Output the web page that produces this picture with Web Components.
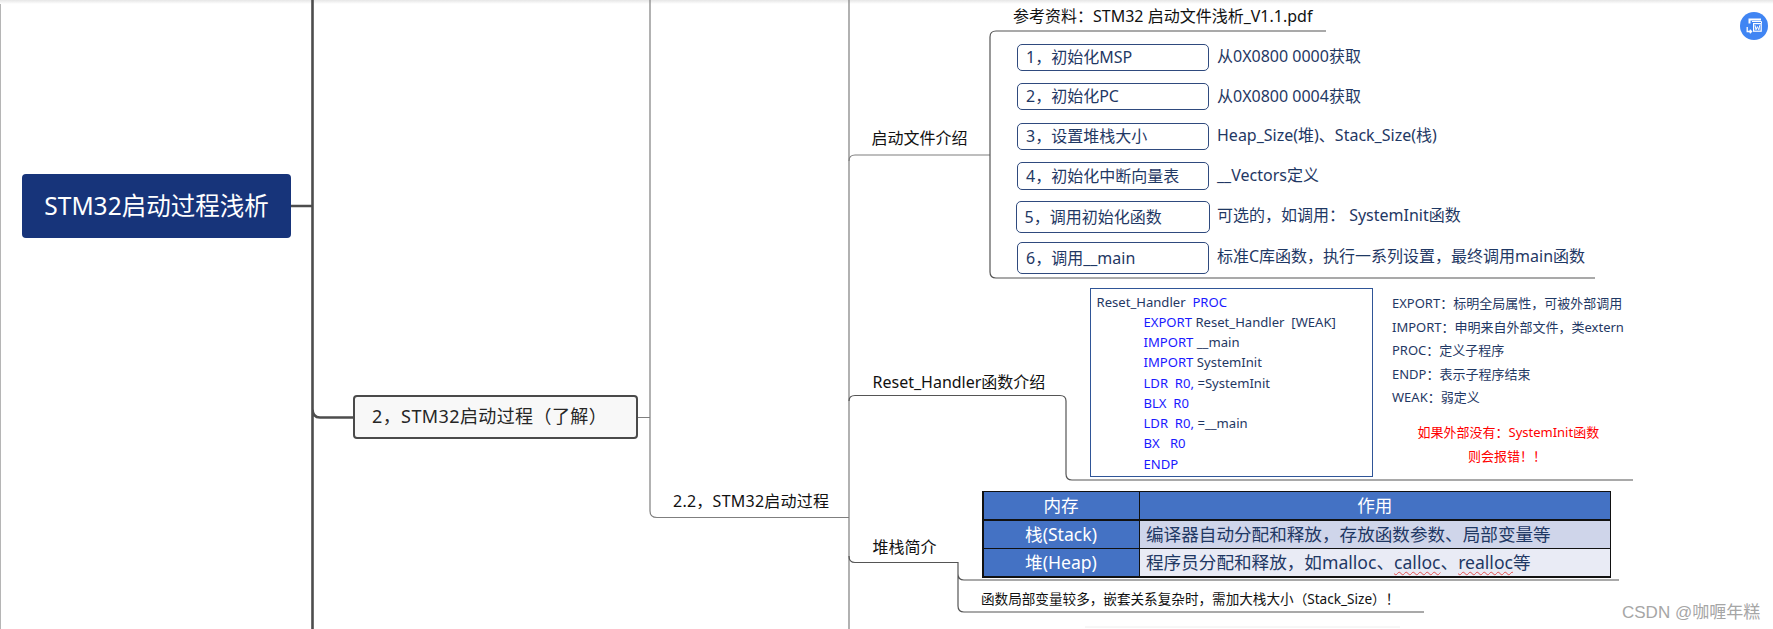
<!DOCTYPE html>
<html lang="zh"><head><meta charset="utf-8"><title>STM32启动过程浅析</title>
<style>
html,body{margin:0;padding:0;background:#fff;overflow:hidden}
body{font-family:"Noto Sans","Noto Sans CJK SC",sans-serif}
</style></head><body>
<mm-canvas>
  <mm-root x="22" y="174" w="269" h="64">STM32启动过程浅析</mm-root>
  <mm-topic x="353" y="395" w="285" h="44">2，STM32启动过程（了解）</mm-topic>

  <mm-label x="673" cy="502" size="16" track="0.25">2.2，STM32启动过程</mm-label>
  <mm-label x="871.5" cy="139" size="16">启动文件介绍</mm-label>
  <mm-label x="872.5" cy="383" size="16">Reset_Handler函数介绍</mm-label>
  <mm-label x="872.5" cy="548" size="16">堆栈简介</mm-label>
  <mm-label x="1013" cy="17" size="16">参考资料：STM32 启动文件浅析_V1.1.pdf</mm-label>

  <mm-step x="1017" y="43.5" w="192" h="27.5">1，初始化MSP</mm-step>
  <mm-step x="1017" y="83" w="192" h="27">2，初始化PC</mm-step>
  <mm-step x="1017" y="123" w="192" h="27">3，设置堆栈大小</mm-step>
  <mm-step x="1017" y="162" w="192" h="28">4，初始化中断向量表</mm-step>
  <mm-step x="1015.5" y="201" w="194" h="32">5，调用初始化函数</mm-step>
  <mm-step x="1017" y="242" w="192" h="32">6，调用__main</mm-step>

  <mm-label x="1217" cy="57" size="16" color="#1f3864">从0X0800 0000获取</mm-label>
  <mm-label x="1217" cy="97" size="16" color="#1f3864">从0X0800 0004获取</mm-label>
  <mm-label x="1217" cy="136" size="16" color="#1f3864">Heap_Size(堆)、Stack_Size(栈)</mm-label>
  <mm-label x="1217" cy="176" size="16" color="#1f3864">__Vectors定义</mm-label>
  <mm-label x="1217" cy="216" size="16" color="#1f3864">可选的，如调用： SystemInit函数</mm-label>
  <mm-label x="1217" cy="257" size="16" color="#1f3864">标准C库函数，执行一系列设置，最终调用main函数</mm-label>

  <mm-code x="1089.5" y="288" w="283" h="189">
    <code-line>Reset_Handler&nbsp; <b>PROC</b></code-line>
    <code-line in><b>EXPORT</b>&nbsp;Reset_Handler&nbsp; [WEAK]</code-line>
    <code-line in><b>IMPORT</b>&nbsp;__main</code-line>
    <code-line in><b>IMPORT</b>&nbsp;SystemInit</code-line>
    <code-line in><b>LDR&nbsp; R0,</b>&nbsp;=SystemInit</code-line>
    <code-line in><b>BLX&nbsp; R0</b></code-line>
    <code-line in><b>LDR&nbsp; R0,</b>&nbsp;=__main</code-line>
    <code-line in><b>BX&nbsp; &nbsp;R0</b></code-line>
    <code-line in><b>ENDP</b></code-line>
  </mm-code>

  <mm-label x="1392" cy="304" size="13" color="#1f3864">EXPORT：标明全局属性，可被外部调用</mm-label>
  <mm-label x="1392" cy="327.5" size="13" color="#1f3864">IMPORT：申明来自外部文件，类extern</mm-label>
  <mm-label x="1392" cy="351" size="13" color="#1f3864">PROC：定义子程序</mm-label>
  <mm-label x="1392" cy="374.5" size="13" color="#1f3864">ENDP：表示子程序结束</mm-label>
  <mm-label x="1392" cy="398" size="13" color="#1f3864">WEAK：弱定义</mm-label>
  <mm-label x="1417.5" cy="433" size="13" color="#ff0000">如果外部没有：SystemInit函数</mm-label>
  <mm-label x="1468" cy="457" size="13" color="#ff0000">则会报错！！</mm-label>

  <mm-table x="982" y="490.5" w="629" h="87"></mm-table>

  <mm-label x="981" cy="599" size="13.6" color="#111">函数局部变量较多，嵌套关系复杂时，需加大栈大小（Stack_Size）！</mm-label>

  <mm-badge x="1740" y="12"></mm-badge>
  <mm-watermark x="1622" cy="610">CSDN @咖喱年糕</mm-watermark>
</mm-canvas>
<script>
const place = el => {
  const s = el.style, a = n => el.getAttribute(n);
  s.setProperty('--x', a('x') + 'px');
  if (a('y')) s.setProperty('--y', a('y') + 'px');
  if (a('cy')) s.setProperty('--y', a('cy') + 'px');
  if (a('w')) s.setProperty('--w', a('w') + 'px');
  if (a('h')) s.setProperty('--h', a('h') + 'px');
};
class Base extends HTMLElement {
  static css = ''; static html = '<slot></slot>';
  connectedCallback() {
    place(this);
    if (!this.shadowRoot) {
      this.attachShadow({mode: 'open'}).innerHTML = `<style>${this.constructor.css}</style>${this.constructor.html}`;
    }
  }
}
const box = ':host{position:absolute;left:var(--x);top:var(--y);width:var(--w);height:var(--h);box-sizing:border-box;display:flex;align-items:center;white-space:nowrap;}';

class MmCanvas extends HTMLElement {
  connectedCallback() {
    this.attachShadow({mode: 'open'}).innerHTML = `<style>
      :host{display:block;position:relative;width:1773px;height:629px;overflow:hidden;background:#fff}
      svg{position:absolute;inset:0}
      .shade{position:absolute;left:0;right:0;top:0;height:4px;background:linear-gradient(#e6e6e6,#fff)}
      .edge{position:absolute;left:0;top:0;bottom:0;width:1px;background:#b5b5b5}
      path{fill:none}
      .thick{stroke:#4d4d4d;stroke-width:2.6}
      .thin{stroke:#7f7f7f;stroke-width:1.2}
      .ink{stroke:#555;stroke-width:1.2}
    </style>
    <div class="edge"></div><div class="shade"></div>
    <svg width="1773" height="629" viewBox="0 0 1773 629">
      <path class="thick" d="M312.5 0V629M291 206H312.5M312.5 409Q312.5 417.5 320 417.5H353"/>
      <path class="thin" d="M650 0V511Q650 517.5 657 517.5H849M638 417.5H650M849 0V629"/>
      <path class="thin" d="M849 161Q849 155 855 155H990"/>
      <path class="ink" d="M990 37Q990 31 996 31H1326M990 37V272Q990 278 996 278H1595"/>
      <path class="ink" d="M849 401Q849 395.5 855 395.5H1060Q1066 395.5 1066 401V474Q1066 480 1072 480H1633"/>
      <path class="ink" d="M849 556Q849 562.5 855 562.5H958V574Q958 580 964 580H1619M958 574V606Q958 612 964 612H1424"/>
      <path d="M1085 627H1400" stroke="#eee" stroke-width="1"/>
    </svg>
    <slot></slot>`;
  }
}
class MmRoot extends Base {
  static css = box + `:host{justify-content:center;background:#17347a;border-radius:4px;color:#fff;font-size:24.5px;padding-bottom:3px}`;
}
class MmTopic extends Base {
  static css = box + `:host{background:#f8f8f8;border:2px solid #4a4a4a;border-radius:4px;color:#262626;font-size:18px;letter-spacing:.4px;padding:0 0 4px 17px}`;
}
class MmLabel extends Base {
  static css = `:host{position:absolute;left:var(--x);top:var(--y);transform:translateY(-50%);white-space:nowrap;line-height:1.2;font-size:var(--s,16px);letter-spacing:var(--t,0);color:var(--c,#111)}`;
  connectedCallback() {
    super.connectedCallback();
    this.style.setProperty('--s', this.getAttribute('size') + 'px');
    if (this.getAttribute('color')) this.style.setProperty('--c', this.getAttribute('color'));
    if (this.getAttribute('track')) this.style.setProperty('--t', this.getAttribute('track') + 'px');
  }
}
class MmStep extends Base {
  static css = box + `:host{border:1.6px solid #2f4a7e;border-radius:5px;color:#1f3864;font-size:16px;padding:0 0 3px 8px;background:#fff}`;
}
class MmCode extends Base {
  static css = box + `:host{display:flex;flex-direction:column;align-items:stretch;border:1.3px solid #2f5597;padding:2.5px 0 0 6px;font-size:13.1px;color:#1f3864;background:#fff}`;
}
class CodeLine extends Base {
  static css = `:host{display:block;height:20.25px;line-height:20.25px;white-space:nowrap}:host([in]){padding-left:47px}::slotted(b){font-weight:400;color:#1a1aff}`;
}
class MmTable extends Base {
  static css = box + `:host{display:grid;grid-template-columns:155px 1fr;grid-template-rows:repeat(3,1fr);gap:1.5px;background:#111;padding:1.5px;font-size:17.6px;align-items:stretch}
    div{display:flex;align-items:center;overflow:hidden;padding-bottom:2px;box-sizing:border-box}
    .h{background:#4472c4;color:#fff;justify-content:center}
    .a{background:#cfd5ea;color:#1f3864;padding-left:6px}
    .b{background:#e9ebf5;color:#1f3864;padding-left:6px}
    u{text-decoration:underline wavy #e05050 1px;text-underline-offset:2px}`;
  static html = `<div class="h">内存</div><div class="h">作用</div>
    <div class="h">栈(Stack)</div><div class="a">编译器自动分配和释放，存放函数参数、局部变量等</div>
    <div class="h">堆(Heap)</div><div class="b"><span>程序员分配和释放，如malloc、<u>calloc</u>、<u>realloc</u>等</span></div>`;
}
class MmBadge extends Base {
  static css = `:host{position:absolute;left:var(--x);top:var(--y);width:28px;height:28px;display:block}`;
  static html = `<svg width="28" height="28" viewBox="0 0 28 28">
    <circle cx="14" cy="14" r="14" fill="#4085f3"/>
    <path d="M9.5 11.5V7.5H21" fill="none" stroke="#fff" stroke-width="2"/>
    <path d="M12 9.5H21.5V11" fill="none" stroke="#fff" stroke-width="1"/>
    <rect x="13.6" y="11.6" width="7.6" height="7.6" fill="none" stroke="#fff" stroke-width="1.2"/>
    <path d="M15 13.2L16 17.8L17.4 14.6L18.8 17.8L19.8 13.2" fill="none" stroke="#fff" stroke-width="1"/>
    <path d="M7.2 15V19.5H11.5M9.8 17.7L11.6 19.5L9.8 21.3" fill="none" stroke="#fff" stroke-width="1.3"/>
  </svg>`;
}
class MmWatermark extends Base {
  static css = `:host{position:absolute;left:var(--x);top:var(--y);transform:translateY(-50%);white-space:nowrap;font:17px "Liberation Sans","Noto Sans CJK SC",sans-serif;color:#a6a6a6}`;
}
customElements.define('mm-canvas', MmCanvas);
customElements.define('mm-root', MmRoot);
customElements.define('mm-topic', MmTopic);
customElements.define('mm-label', MmLabel);
customElements.define('mm-step', MmStep);
customElements.define('mm-code', MmCode);
customElements.define('code-line', CodeLine);
customElements.define('mm-table', MmTable);
customElements.define('mm-badge', MmBadge);
customElements.define('mm-watermark', MmWatermark);
</script>
</body></html>
